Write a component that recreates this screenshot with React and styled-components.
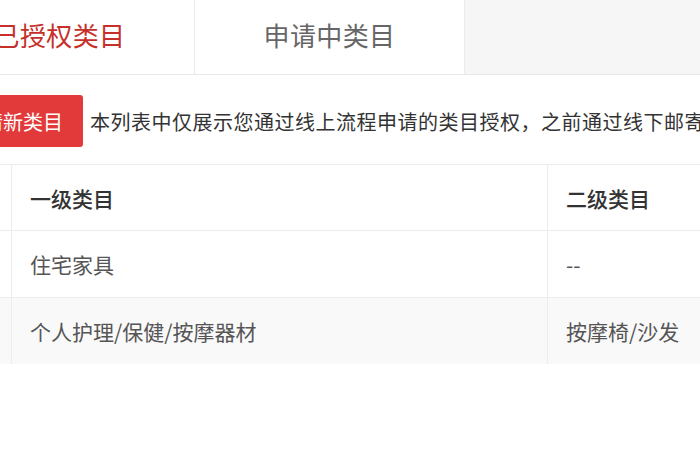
import React from "react";
import styled, { createGlobalStyle } from "styled-components";

const Global = createGlobalStyle`
  html, body { margin: 0; padding: 0; background: #fff; overflow: hidden; }
  body { font-family: "Noto Sans CJK SC", "Noto Sans", sans-serif; }
`;

const Page = styled.div`
  width: 1100px;
  margin-left: -75px;
`;

const TabBar = styled.div`
  display: flex;
  height: 74px;
  background: #f6f6f6;
  border-bottom: 1px solid #e8e8e8;
`;

const Tab = styled.div`
  width: 270px;
  display: flex;
  align-items: center;
  justify-content: center;
  padding-bottom: 6px;
  box-sizing: border-box;
  background: #fff;
  border-right: 1px solid #ececec;
  font-size: 26px;
  letter-spacing: 0.4px;
  color: ${(p) => (p.$active ? "#c6302b" : "#666")};
`;

const Toolbar = styled.div`
  display: flex;
  align-items: center;
  padding: 20px 0 0 18px;
  gap: 7px;
`;

const Button = styled.button`
  height: 52px;
  padding: 0 20px;
  border: none;
  border-radius: 3px;
  background: #e23a3a;
  color: #fff;
  font-family: inherit;
  font-size: 20px;
  white-space: nowrap;
`;

const Note = styled.span`
  font-size: 20px;
  letter-spacing: 0.5px;
  color: #333;
  white-space: nowrap;
`;

const Table = styled.div`
  margin-top: 17px;
  border-top: 1px solid #ececec;
`;

const Row = styled.div`
  display: grid;
  grid-template-columns: 87px 536px 1fr;
  height: ${(p) => (p.$head ? 65 : 66)}px;
  background: ${(p) => (p.$alt ? "#f9f9f9" : "#fff")};
  border-bottom: ${(p) => (p.$last ? "none" : "1px solid #ececec")};
`;

const Cell = styled.div`
  display: flex;
  align-items: center;
  padding-left: 18px;
  font-size: 21px;
  white-space: nowrap;
  color: ${(p) => (p.$head ? "#333" : "#555")};
  font-weight: ${(p) => (p.$head ? 500 : 400)};
  border-right: ${(p) => (p.$lastCol ? "none" : "1px solid #ececec")};
`;

const rows = [
  ["住宅家具", "--"],
  ["个人护理/保健/按摩器材", "按摩椅/沙发"],
];

export default function App() {
  return (
    <>
      <Global />
      <Page>
        <TabBar>
          <Tab $active>已授权类目</Tab>
          <Tab>申请中类目</Tab>
        </TabBar>
        <Toolbar>
          <Button>申请新类目</Button>
          <Note>本列表中仅展示您通过线上流程申请的类目授权，之前通过线下邮寄资质申请的类目授权请联系客服查询</Note>
        </Toolbar>
        <Table>
          <Row $head>
            <Cell />
            <Cell $head>一级类目</Cell>
            <Cell $head $lastCol>二级类目</Cell>
          </Row>
          {rows.map((r, i) => (
            <Row key={i} $alt={i === rows.length - 1} $last={i === rows.length - 1}>
              <Cell />
              <Cell>{r[0]}</Cell>
              <Cell $lastCol>{r[1]}</Cell>
            </Row>
          ))}
        </Table>
      </Page>
    </>
  );
}
